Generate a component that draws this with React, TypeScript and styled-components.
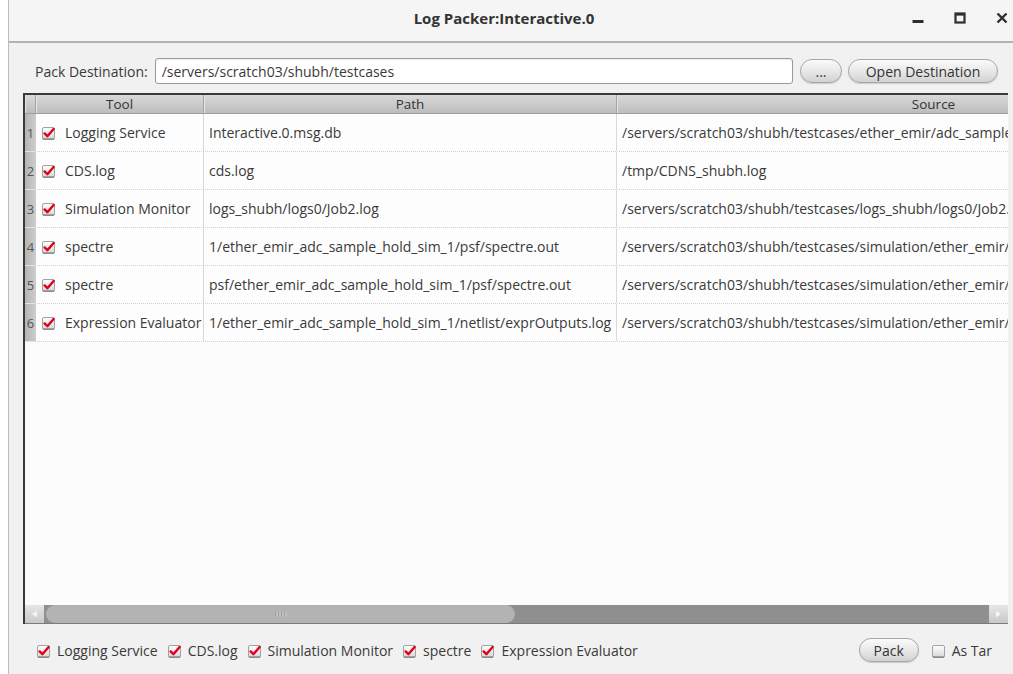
import React from 'react';
import styled, { createGlobalStyle } from 'styled-components';

const GlobalStyle = createGlobalStyle`
  html, body {
    margin: 0;
    padding: 0;
    background: #ffffff;
  }
  body {
    font-family: "Open Sans", "DejaVu Sans", sans-serif;
    font-size: 14px;
    color: #3a3a3a;
  }
`;

const Window = styled.div`
  margin-left: 8px;
  width: 1004px;
  height: 674px;
  background: #f1f1f1;
  border-left: 1px solid #bcbcbc;
  display: flex;
  flex-direction: column;
  overflow: hidden;
`;

const TitleBar = styled.div`
  height: 43px;
  flex: none;
  display: grid;
  grid-template-columns: 1fr auto 1fr;
  align-items: center;
  padding-right: 10px;
  padding-bottom: 5px;
  box-sizing: border-box;
  background: #f5f5f5;
  border-bottom: 2px solid #b3b3b3;
`;

const Title = styled.div`
  grid-column: 2;
  font-size: 15px;
  font-weight: 700;
  color: #333;
  margin-right: 4px;
`;

const Controls = styled.div`
  justify-self: end;
  display: flex;
  align-items: center;
  gap: 30px;
  margin-right: -5px;
`;

const ControlIcon = styled.svg`
  display: block;
  width: 12px;
  height: 12px;
`;

const Body = styled.div`
  flex: 1;
  display: flex;
  flex-direction: column;
  padding: 15px 5px 0 14px;
`;

const DestRow = styled.div`
  display: flex;
  align-items: center;
  height: 26px;
  padding-left: 12px;
  padding-right: 10px;
`;

const Label = styled.span`
  margin-right: 7px;
  white-space: nowrap;
`;

const PathInput = styled.div`
  flex: 1;
  height: 24px;
  border: 1px solid #9a9a9a;
  border-radius: 3px;
  background: #ffffff;
  box-shadow: inset 0 1px 1px rgba(0, 0, 0, 0.08);
  display: flex;
  align-items: center;
  padding-left: 6px;
  margin-right: 7px;
  white-space: nowrap;
`;

const PillButton = styled.div<{ $w: number; $last?: boolean }>`
  width: ${(p) => p.$w}px;
  flex: none;
  height: 24px;
  box-sizing: border-box;
  border: 1px solid #a6a6a6;
  border-radius: 12px;
  background: linear-gradient(#fbfbfb, #e6e6e6 55%, #d2d2d2);
  box-shadow: 0 1px 1px rgba(0, 0, 0, 0.15);
  display: flex;
  align-items: center;
  justify-content: center;
  color: #333;
  white-space: nowrap;
  margin-right: ${(p) => (p.$last ? 0 : 6)}px;
`;

const Table = styled.div`
  margin-top: 9px;
  height: 531px;
  width: 985px;
  box-sizing: border-box;
  border-top: 2px solid #3a3a3a;
  border-left: 2px solid #3a3a3a;
  background: #fcfcfc;
  display: flex;
  flex-direction: column;
  overflow: hidden;
`;

const Grid = styled.div<{ $header?: boolean }>`
  display: grid;
  grid-template-columns: 11px 168px 413px 634px;
  height: ${(p) => (p.$header ? '18px' : '37px')};
  border-bottom: 1px ${(p) => (p.$header ? 'solid #9e9e9e' : 'dotted #cfcfcf')};
  background: ${(p) => (p.$header ? 'linear-gradient(#d9d9d9, #bdbdbd)' : '#fdfdfd')};
`;

const HeadCell = styled.div`
  display: flex;
  align-items: center;
  justify-content: center;
  border-right: 1px solid #a4a4a4;
  box-shadow: inset 1px 0 0 #e4e4e4;
  color: #333;
  font-size: 13.5px;
  white-space: nowrap;
`;

const NumCell = styled.div`
  display: flex;
  align-items: center;
  justify-content: center;
  background: linear-gradient(90deg, #b5b5b5, #cdcdcd);
  border-bottom: 1px solid #e2e2e2;
  margin-bottom: -1px;
  font-size: 13px;
  color: #555;
`;

const Cell = styled.div<{ $gap?: number }>`
  display: flex;
  align-items: center;
  gap: ${(p) => p.$gap ?? 0}px;
  padding-left: 5px;
  border-right: 1px solid #d9d9d9;
  white-space: nowrap;
  overflow: hidden;
`;

const Filler = styled.div`
  flex: 1;
`;

const ScrollBar = styled.div`
  height: 18px;
  flex: none;
  display: flex;
  align-items: stretch;
  background: #8f8f8f;
  border-bottom: 1px solid #7a7a7a;
`;

const ArrowButton = styled.div`
  width: 19px;
  flex: none;
  display: flex;
  align-items: center;
  justify-content: center;
  background: linear-gradient(#e6e6e6, #c9c9c9);
`;

const Thumb = styled.div`
  width: 469px;
  margin-left: 2px;
  border-radius: 9px;
  background: #b3b3b3;
  display: flex;
  align-items: center;
  justify-content: center;
`;

const Grip = styled.div`
  width: 12px;
  height: 5px;
  background: repeating-linear-gradient(90deg, #9c9c9c 0 1px, #c2c2c2 1px 3px);
`;

const Track = styled.div`
  flex: 1;
`;

const BottomBar = styled.div`
  display: flex;
  align-items: center;
  height: 24px;
  margin-top: 14px;
  padding-left: 13px;
  padding-right: 16px;
`;

const CheckItem = styled.label<{ $push?: boolean }>`
  display: flex;
  align-items: center;
  gap: 6px;
  margin-left: ${(p) => (p.$push ? 12 : 0)}px;
  margin-right: ${(p) => (p.$push ? 0 : 9)}px;
  white-space: nowrap;
`;

const BoxSvg = styled.svg`
  display: block;
  width: 15px;
  height: 15px;
  flex: none;
`;

const Check: React.FC<{ checked?: boolean }> = ({ checked = true }) => (
  <BoxSvg viewBox="0 0 15 15">
    <defs>
      <linearGradient id="cbg" x1="0" y1="0" x2="0" y2="1">
        <stop offset="0" stopColor="#ffffff" />
        <stop offset="1" stopColor="#d6d6d6" />
      </linearGradient>
    </defs>
    <rect x="1.5" y="2.5" width="12" height="12" rx="1.5" fill="url(#cbg)" stroke="#a2a2a2" />
    <line x1="2" y1="14" x2="13" y2="14" stroke="#7c7c7c" strokeWidth="1.2" />
    {checked && (
      <path
        d="M3.6 8.4 L6.4 11.2 L12.6 4"
        fill="none"
        stroke="#e00018"
        strokeWidth="2.4"
        strokeLinecap="round"
        strokeLinejoin="round"
      />
    )}
  </BoxSvg>
);

const rows = [
  {
    tool: 'Logging Service',
    path: 'Interactive.0.msg.db',
    source: '/servers/scratch03/shubh/testcases/ether_emir/adc_sample_hold_sim_1/Interactive.0.msg.db',
  },
  { tool: 'CDS.log', path: 'cds.log', source: '/tmp/CDNS_shubh.log' },
  {
    tool: 'Simulation Monitor',
    path: 'logs_shubh/logs0/Job2.log',
    source: '/servers/scratch03/shubh/testcases/logs_shubh/logs0/Job2.log',
  },
  {
    tool: 'spectre',
    path: '1/ether_emir_adc_sample_hold_sim_1/psf/spectre.out',
    source: '/servers/scratch03/shubh/testcases/simulation/ether_emir/adc_sample_hold_sim_1/psf/spectre.out',
  },
  {
    tool: 'spectre',
    path: 'psf/ether_emir_adc_sample_hold_sim_1/psf/spectre.out',
    source: '/servers/scratch03/shubh/testcases/simulation/ether_emir/adc_sample_hold_sim_1/psf/spectre.out',
  },
  {
    tool: 'Expression Evaluator',
    path: '1/ether_emir_adc_sample_hold_sim_1/netlist/exprOutputs.log',
    source: '/servers/scratch03/shubh/testcases/simulation/ether_emir/adc_sample_hold_sim_1/netlist/exprOutputs.log',
  },
];

const filters = ['Logging Service', 'CDS.log', 'Simulation Monitor', 'spectre', 'Expression Evaluator'];

export default function App() {
  return (
    <>
      <GlobalStyle />
      <Window>
        <TitleBar>
          <Title>Log Packer:Interactive.0</Title>
          <Controls>
            <ControlIcon viewBox="0 0 12 12">
              <rect x="0.5" y="8" width="11" height="3" fill="#2e2e2e" />
            </ControlIcon>
            <ControlIcon viewBox="0 0 12 12">
              <rect x="1.5" y="1.5" width="9" height="9" fill="none" stroke="#2e2e2e" strokeWidth="2.2" />
              <rect x="1" y="1" width="10" height="2.6" fill="#2e2e2e" />
            </ControlIcon>
            <ControlIcon viewBox="0 0 12 12">
              <path d="M1.5 1.5 L10.5 10.5 M10.5 1.5 L1.5 10.5" stroke="#2e2e2e" strokeWidth="2.4" />
            </ControlIcon>
          </Controls>
        </TitleBar>
        <Body>
          <DestRow>
            <Label>Pack Destination:</Label>
            <PathInput>/servers/scratch03/shubh/testcases</PathInput>
            <PillButton $w={42}>...</PillButton>
            <PillButton $w={150} $last>
              Open Destination
            </PillButton>
          </DestRow>
          <Table>
            <Grid $header>
              <HeadCell />
              <HeadCell>Tool</HeadCell>
              <HeadCell>Path</HeadCell>
              <HeadCell>Source</HeadCell>
            </Grid>
            {rows.map((r, i) => (
              <Grid key={i}>
                <NumCell>{i + 1}</NumCell>
                <Cell $gap={9}>
                  <Check />
                  {r.tool}
                </Cell>
                <Cell>{r.path}</Cell>
                <Cell>{r.source}</Cell>
              </Grid>
            ))}
            <Filler />
            <ScrollBar>
              <ArrowButton>
                <svg width="7" height="8" viewBox="0 0 7 8">
                  <path d="M6 0.5 L6 7.5 L1 4 Z" fill="#f4f4f4" />
                </svg>
              </ArrowButton>
              <Thumb>
                <Grip />
              </Thumb>
              <Track />
              <ArrowButton>
                <svg width="7" height="8" viewBox="0 0 7 8">
                  <path d="M1 0.5 L1 7.5 L6 4 Z" fill="#f4f4f4" />
                </svg>
              </ArrowButton>
            </ScrollBar>
          </Table>
          <BottomBar>
            {filters.map((f) => (
              <CheckItem key={f}>
                <Check />
                {f}
              </CheckItem>
            ))}
            <Filler />
            <PillButton $w={60} $last>
              Pack
            </PillButton>
            <CheckItem as="div" $push>
              <Check checked={false} />
              As Tar
            </CheckItem>
          </BottomBar>
        </Body>
      </Window>
    </>
  );
}
